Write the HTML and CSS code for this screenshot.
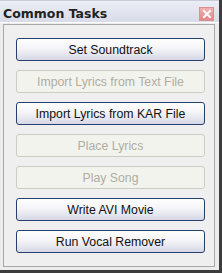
FILE: index.html
```html
<!DOCTYPE html>
<html>
<head>
<meta charset="utf-8">
<link rel="stylesheet" href="styles.css">
</head>
<body>
<div class="window">
  <div class="titlebar">
    <span class="title">Common Tasks</span>
    <span class="close"><svg width="10" height="10" viewBox="0 0 10 10"><path d="M2 2 L8 8 M8 2 L2 8" stroke="#fff" stroke-width="2" stroke-linecap="square"/></svg></span>
  </div>
  <div class="panel">
    <div class="btn">Set Soundtrack</div>
    <div class="btn disabled">Import Lyrics from Text File</div>
    <div class="btn">Import Lyrics from KAR File</div>
    <div class="btn disabled">Place Lyrics</div>
    <div class="btn disabled">Play Song</div>
    <div class="btn">Write AVI Movie</div>
    <div class="btn">Run Vocal Remover</div>
  </div>
</div>
</body>
</html>
```
FILE: styles.css
```css
html, body {
  margin: 0;
  padding: 0;
  background: #3c3c3c;
}
.window {
  width: 219px;
  height: 270px;
  background: #ececec;
  display: flex;
  flex-direction: column;
  box-sizing: border-box;
  border-top: 1px solid #c8ccd8;
}
.titlebar {
  height: 21px;
  display: flex;
  align-items: center;
  justify-content: space-between;
  padding: 0 5px 0 3px;
  background: linear-gradient(#eceef6, #d8dbe8);
  border-bottom: 1px solid #ffffff;
  flex: none;
}
.title {
  font-family: "DejaVu Sans", sans-serif;
  font-weight: bold;
  font-size: 12.5px;
  color: #222;
  margin-top: 4px;
}
.close {
  width: 15px;
  height: 14px;
  margin-top: 4px;
  background: linear-gradient(#f2b0b0, #e08686);
  border: 1px solid #d89090;
  display: flex;
  align-items: center;
  justify-content: center;
  box-sizing: border-box;
}
.panel {
  flex: 1;
  margin: 1px 4px 3px 3px;
  border: 1px solid #a8a8a8;
  background: #efefef;
  padding: 13px 9px 0 12px;
  display: flex;
  flex-direction: column;
  gap: 9px;
}
.btn {
  height: 23px;
  box-sizing: border-box;
  border: 1px solid #243f6e;
  border-radius: 3px;
  background: linear-gradient(#ffffff 0%, #f4f4f7 45%, #d6d8e6 100%);
  display: flex;
  align-items: center;
  justify-content: center;
  font-family: "Liberation Sans", Arial, sans-serif;
  font-size: 12.3px;
  color: #111;
}
.btn.disabled {
  border-color: #cdccc4;
  background: #f3f3ee;
  color: #b0ada2;
}
```
